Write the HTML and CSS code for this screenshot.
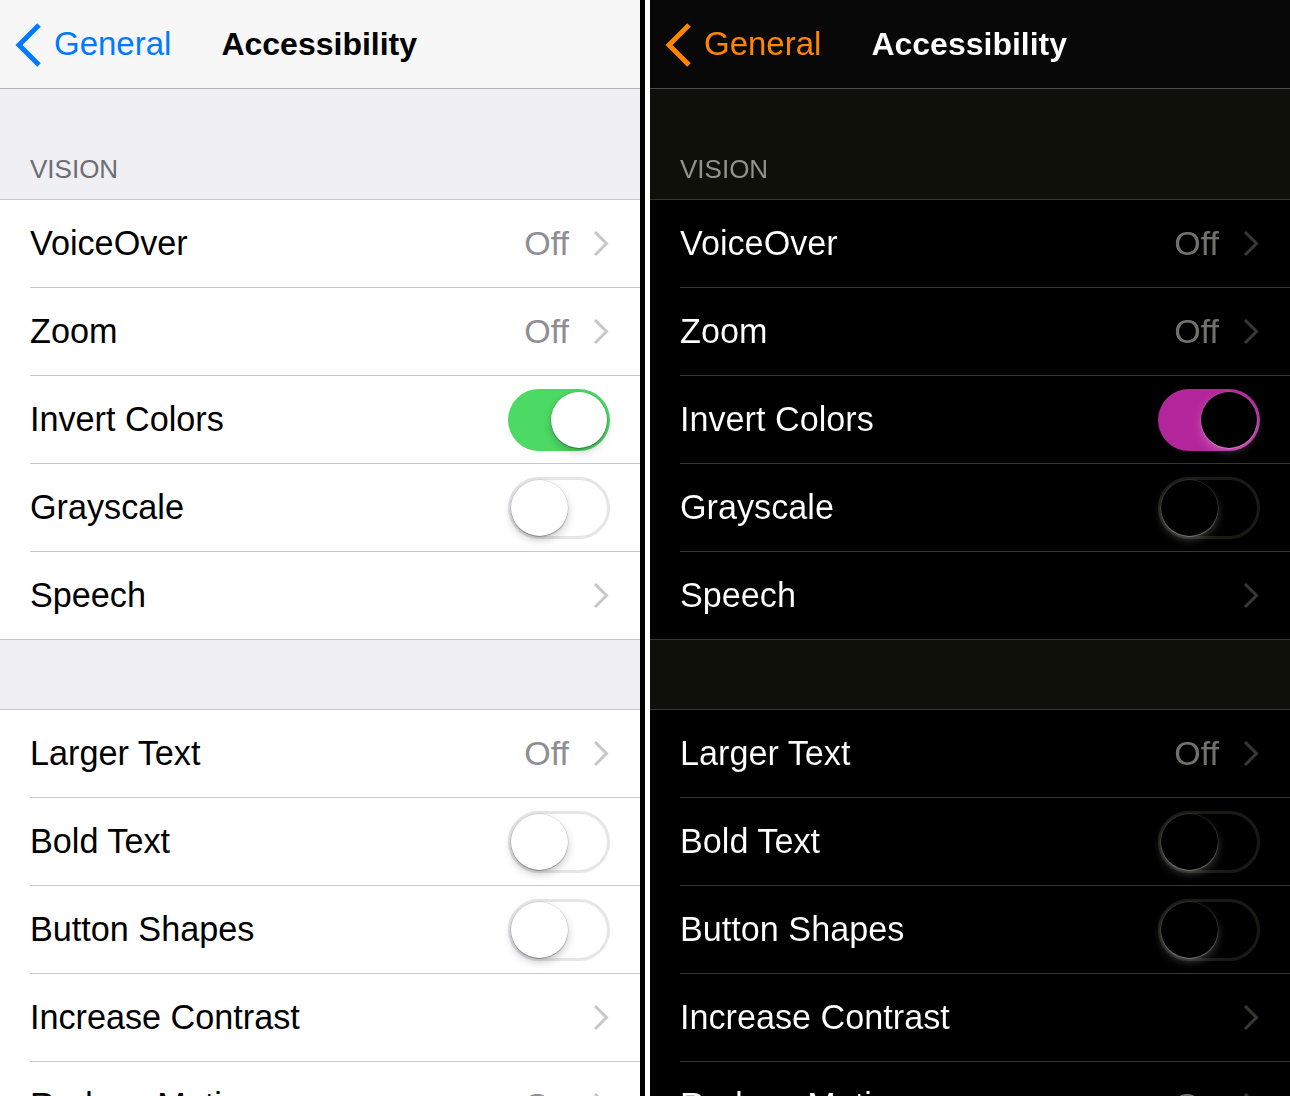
FILE: index.html
```html
<!DOCTYPE html>
<html>
<head>
<meta charset="utf-8">
<title>Accessibility</title>
<link rel="stylesheet" href="styles.css">
</head>
<body>
<div class="screen">
  <div class="panel">
    <div class="nav">
      <svg class="back-icon" width="28" height="44" viewBox="0 0 28 44"><polyline points="24,2 4,22 24,42" fill="none" stroke="currentColor" stroke-width="5"/></svg>
      <span class="back-label">General</span>
      <span class="title">Accessibility</span>
    </div>
    <div class="section-header">VISION</div>
    <div class="group">
      <div class="row"><span class="label">VoiceOver</span><span class="value">Off</span><svg class="chev" width="16" height="27" viewBox="0 0 16 27"><polyline points="2,2 13.5,13.5 2,25" fill="none" stroke="currentColor" stroke-width="3"/></svg></div>
      <div class="row"><span class="label">Zoom</span><span class="value">Off</span><svg class="chev" width="16" height="27" viewBox="0 0 16 27"><polyline points="2,2 13.5,13.5 2,25" fill="none" stroke="currentColor" stroke-width="3"/></svg></div>
      <div class="row"><span class="label">Invert Colors</span><span class="switch on"><span class="knob"></span></span></div>
      <div class="row"><span class="label">Grayscale</span><span class="switch off"><span class="knob"></span></span></div>
      <div class="row"><span class="label">Speech</span><svg class="chev" width="16" height="27" viewBox="0 0 16 27"><polyline points="2,2 13.5,13.5 2,25" fill="none" stroke="currentColor" stroke-width="3"/></svg></div>
    </div>
    <div class="spacer"></div>
    <div class="group">
      <div class="row"><span class="label">Larger Text</span><span class="value">Off</span><svg class="chev" width="16" height="27" viewBox="0 0 16 27"><polyline points="2,2 13.5,13.5 2,25" fill="none" stroke="currentColor" stroke-width="3"/></svg></div>
      <div class="row"><span class="label">Bold Text</span><span class="switch off"><span class="knob"></span></span></div>
      <div class="row"><span class="label">Button Shapes</span><span class="switch off"><span class="knob"></span></span></div>
      <div class="row"><span class="label">Increase Contrast</span><svg class="chev" width="16" height="27" viewBox="0 0 16 27"><polyline points="2,2 13.5,13.5 2,25" fill="none" stroke="currentColor" stroke-width="3"/></svg></div>
      <div class="row"><span class="label">Reduce Motion</span><span class="value">On</span><svg class="chev" width="16" height="27" viewBox="0 0 16 27"><polyline points="2,2 13.5,13.5 2,25" fill="none" stroke="currentColor" stroke-width="3"/></svg></div>
    </div>
  </div>
  <div class="divider"></div>
  <div class="panel inverted">
    <div class="nav">
      <svg class="back-icon" width="28" height="44" viewBox="0 0 28 44"><polyline points="24,2 4,22 24,42" fill="none" stroke="currentColor" stroke-width="5"/></svg>
      <span class="back-label">General</span>
      <span class="title">Accessibility</span>
    </div>
    <div class="section-header">VISION</div>
    <div class="group">
      <div class="row"><span class="label">VoiceOver</span><span class="value">Off</span><svg class="chev" width="16" height="27" viewBox="0 0 16 27"><polyline points="2,2 13.5,13.5 2,25" fill="none" stroke="currentColor" stroke-width="3"/></svg></div>
      <div class="row"><span class="label">Zoom</span><span class="value">Off</span><svg class="chev" width="16" height="27" viewBox="0 0 16 27"><polyline points="2,2 13.5,13.5 2,25" fill="none" stroke="currentColor" stroke-width="3"/></svg></div>
      <div class="row"><span class="label">Invert Colors</span><span class="switch on"><span class="knob"></span></span></div>
      <div class="row"><span class="label">Grayscale</span><span class="switch off"><span class="knob"></span></span></div>
      <div class="row"><span class="label">Speech</span><svg class="chev" width="16" height="27" viewBox="0 0 16 27"><polyline points="2,2 13.5,13.5 2,25" fill="none" stroke="currentColor" stroke-width="3"/></svg></div>
    </div>
    <div class="spacer"></div>
    <div class="group">
      <div class="row"><span class="label">Larger Text</span><span class="value">Off</span><svg class="chev" width="16" height="27" viewBox="0 0 16 27"><polyline points="2,2 13.5,13.5 2,25" fill="none" stroke="currentColor" stroke-width="3"/></svg></div>
      <div class="row"><span class="label">Bold Text</span><span class="switch off"><span class="knob"></span></span></div>
      <div class="row"><span class="label">Button Shapes</span><span class="switch off"><span class="knob"></span></span></div>
      <div class="row"><span class="label">Increase Contrast</span><svg class="chev" width="16" height="27" viewBox="0 0 16 27"><polyline points="2,2 13.5,13.5 2,25" fill="none" stroke="currentColor" stroke-width="3"/></svg></div>
      <div class="row"><span class="label">Reduce Motion</span><span class="value">On</span><svg class="chev" width="16" height="27" viewBox="0 0 16 27"><polyline points="2,2 13.5,13.5 2,25" fill="none" stroke="currentColor" stroke-width="3"/></svg></div>
    </div>
  </div>
</div>
</body>
</html>
```
FILE: styles.css
```css
html, body {
  margin: 0;
  padding: 0;
  background: #000;
}
body {
  font-family: "Liberation Sans", Arial, sans-serif;
  overflow: hidden;
}
.screen {
  display: flex;
  width: 1290px;
  height: 1096px;
  overflow: hidden;
}
.panel {
  width: 640px;
  flex: 0 0 640px;
  background: #efeff4;
  height: 1096px;
  overflow: hidden;
}
.panel.inverted {
  filter: invert(1);
}
.divider {
  flex: 0 0 10px;
  box-sizing: border-box;
  border-left: 5px solid #000;
  background: #fff;
}
.nav {
  height: 88px;
  background: #f7f7f7;
  border-bottom: 1px solid #b2b2b2;
  display: flex;
  align-items: center;
  padding-left: 15px;
}
.back-icon {
  color: #007aff;
  margin-top: 1px;
}
.back-label {
  color: #007aff;
  font-size: 33px;
  margin-left: 11px;
}
.title {
  color: #000;
  font-size: 32px;
  font-weight: bold;
  margin-left: 50px;
}
.section-header {
  height: 110px;
  box-sizing: border-box;
  display: flex;
  align-items: flex-end;
  padding: 0 0 14px 30px;
  font-size: 26px;
  color: #6d6d72;
}
.group {
  background: #fff;
  border-top: 1px solid #c8c7cc;
  border-bottom: 1px solid #c8c7cc;
}
.row {
  display: flex;
  align-items: center;
  height: 87px;
  margin-left: 30px;
  padding-right: 30px;
  border-bottom: 1px solid #c8c7cc;
}
.row:last-child {
  border-bottom: none;
}
.label {
  flex: 1;
  font-size: 34.2px;
  color: #000;
}
.value {
  font-size: 34px;
  color: #8e8e93;
  margin-right: 24px;
}
.chev {
  color: #c7c7cc;
  margin-right: 1px;
}
.spacer {
  height: 69px;
}
.switch {
  position: relative;
  width: 102px;
  height: 62px;
  border-radius: 31px;
  box-sizing: border-box;
}
.switch.on {
  background: #4cd964;
}
.switch.off {
  background: #fff;
  border: 3px solid #e5e5ea;
}
.knob {
  position: absolute;
  width: 56px;
  height: 56px;
  border-radius: 50%;
  background: #fff;
  box-shadow: 0 4px 8px rgba(0, 0, 0, 0.22), 0 1px 1px rgba(0, 0, 0, 0.25), 0 0 0 0.5px rgba(0, 0, 0, 0.12);
}
.switch.on .knob {
  top: 3px;
  right: 3px;
}
.switch.off .knob {
  top: 0;
  left: 0;
  width: 57px;
  height: 56px;
}
```
